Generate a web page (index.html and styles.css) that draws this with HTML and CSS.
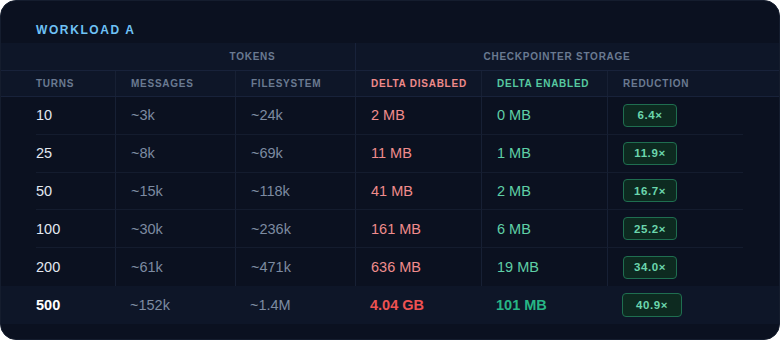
FILE: index.html
```html
<!DOCTYPE html>
<html>
<head>
<meta charset="utf-8">
<link rel="stylesheet" href="styles.css">
</head>
<body>
<div class="card">
  <div class="title">WORKLOAD A</div>
  <div class="table">
    <div class="hrow group">
      <div class="gut"></div>
      <div class="gcell"></div>
      <div class="gcell tokens">TOKENS</div>
      <div class="gcell storage">CHECKPOINTER STORAGE</div>
      <div class="gut"></div>
    </div>
    <div class="hrow cols">
      <div class="gut"></div>
      <div class="hc first">TURNS</div>
      <div class="hc sep">MESSAGES</div>
      <div class="hc sep">FILESYSTEM</div>
      <div class="hc sep dis">DELTA DISABLED</div>
      <div class="hc sep en">DELTA ENABLED</div>
      <div class="hc sep">REDUCTION</div>
      <div class="gut"></div>
    </div>

    <div class="row">
      <div class="gut"></div>
      <div class="c first turns">10</div>
      <div class="c sep muted">~3k</div>
      <div class="c sep muted">~24k</div>
      <div class="c sep dis">2 MB</div>
      <div class="c sep en">0 MB</div>
      <div class="c sep"><span class="badge">6.4×</span></div>
      <div class="gut"></div>
    </div>
    <div class="row">
      <div class="gut"></div>
      <div class="c first turns">25</div>
      <div class="c sep muted">~8k</div>
      <div class="c sep muted">~69k</div>
      <div class="c sep dis">11 MB</div>
      <div class="c sep en">1 MB</div>
      <div class="c sep"><span class="badge">11.9×</span></div>
      <div class="gut"></div>
    </div>
    <div class="row">
      <div class="gut"></div>
      <div class="c first turns">50</div>
      <div class="c sep muted">~15k</div>
      <div class="c sep muted">~118k</div>
      <div class="c sep dis">41 MB</div>
      <div class="c sep en">2 MB</div>
      <div class="c sep"><span class="badge">16.7×</span></div>
      <div class="gut"></div>
    </div>
    <div class="row">
      <div class="gut"></div>
      <div class="c first turns">100</div>
      <div class="c sep muted">~30k</div>
      <div class="c sep muted">~236k</div>
      <div class="c sep dis">161 MB</div>
      <div class="c sep en">6 MB</div>
      <div class="c sep"><span class="badge">25.2×</span></div>
      <div class="gut"></div>
    </div>
    <div class="row last-plain">
      <div class="gut"></div>
      <div class="c first turns">200</div>
      <div class="c sep muted">~61k</div>
      <div class="c sep muted">~471k</div>
      <div class="c sep dis">636 MB</div>
      <div class="c sep en">19 MB</div>
      <div class="c sep"><span class="badge">34.0×</span></div>
      <div class="gut"></div>
    </div>
    <div class="row hl">
      <div class="gut"></div>
      <div class="c first turns">500</div>
      <div class="c muted">~152k</div>
      <div class="c muted">~1.4M</div>
      <div class="c dis">4.04 GB</div>
      <div class="c en">101 MB</div>
      <div class="c"><span class="badge big">40.9×</span></div>
      <div class="gut"></div>
    </div>
  </div>
</div>
</body>
</html>
```

FILE: styles.css
```css
* { box-sizing: border-box; }
html, body { margin: 0; padding: 0; background: #ffffff; }
body {
  font-family: "Liberation Sans", Arial, sans-serif;
  width: 780px;
  height: 340px;
  overflow: hidden;
}
.card {
  width: 780px;
  height: 340px;
  background: #0b1120;
  border: 1px solid #151d2e;
  border-radius: 16px;
  overflow: hidden;
}
.title {
  height: 42px;
  padding: 22px 0 0 35px;
  font-size: 12px;
  font-weight: 700;
  letter-spacing: 1.6px;
  color: #6fc2f6;
  line-height: 14px;
}
.table { display: flex; flex-direction: column; }
.hrow, .row {
  display: grid;
  grid-template-columns: 35px 79px 120px 120px 126px 126px 136px 36px;
}
.group {
  background: #0e1628;
  height: 28px;
  border-bottom: 1px solid #18223a;
}
.group .gcell {
  font-size: 10px;
  font-weight: 700;
  letter-spacing: 0.75px;
  color: #6a7a91;
  line-height: 27px;
  text-align: center;
}
.group .tokens { grid-column: 3 / 5; padding-left: 35px; }
.group .storage { grid-column: 5 / 8; padding-left: 15px; border-left: 1px solid #18223a; }
.cols {
  background: #0e1628;
  height: 26px;
  border-bottom: 1px solid #18223a;
}
.hc {
  font-size: 10px;
  font-weight: 700;
  letter-spacing: 0.75px;
  color: #6a7a91;
  line-height: 25px;
  padding-left: 15px;
  white-space: nowrap;
}
.hc.first { padding-left: 0; }
.sep { border-left: 1px solid #172034; }
.hc.dis { color: #ef8a8a; }
.hc.en { color: #56c9a0; }

.row { height: 37.8px; }
.c {
  display: flex;
  align-items: center;
  padding-left: 15px;
  font-size: 14.5px;
  color: #e2e8f0;
  border-bottom: 1px solid #141c2e;
}
.c.first { padding-left: 0; }
.last-plain .c { border-bottom: none; }
.c.muted { color: #7d8ba1; }
.c.dis { color: #f08c8c; }
.c.en { color: #5fcfa6; }
.badge {
  display: inline-flex;
  align-items: center;
  justify-content: center;
  width: 54px;
  height: 23px;
  border: 1px solid #1f6e50;
  background: #0d2a20;
  border-radius: 4px;
  color: #6bd6ad;
  font-size: 11.5px;
  font-weight: 700;
  letter-spacing: 0.6px;
}
.hl { background: #0e1628; }
.hl .c { border-bottom: none; font-weight: 700; }
.hl .turns { color: #ffffff; }
.hl .c.muted { font-weight: 400; }
.hl .c.dis { color: #ef5252; }
.hl .c.en { color: #27b585; }
.badge.big { width: 60px; height: 24px; }
```
